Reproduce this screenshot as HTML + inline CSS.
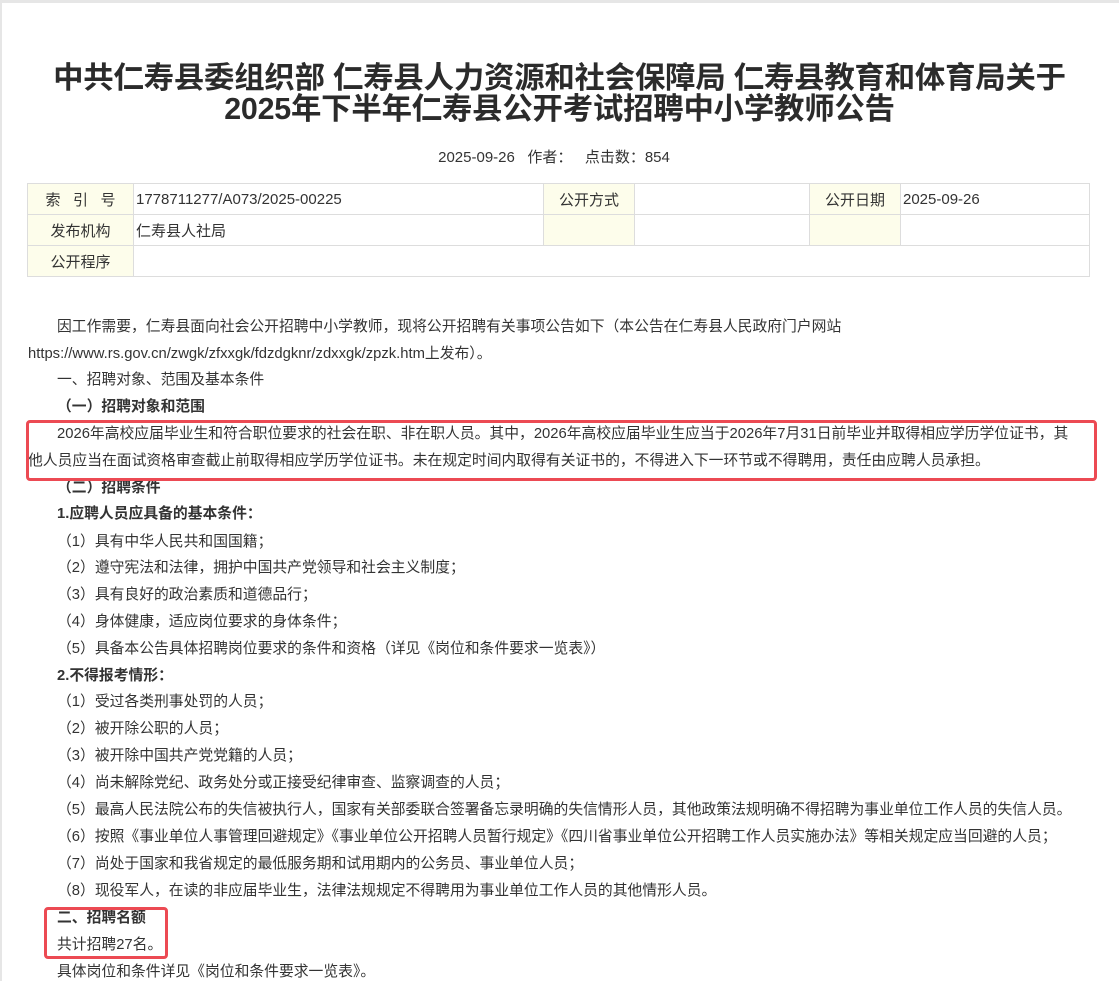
<!DOCTYPE html>
<html><head><meta charset="utf-8"><style>
body{margin:0;width:1119px;height:981px;overflow:hidden;background:#fff;font-family:"Liberation Sans","Noto Sans CJK SC",sans-serif;color:#333;position:relative}
.frame{position:absolute;left:0;top:0;width:1119px;height:981px;border-left:2px solid #e6e6e6;border-top:3px solid #e6e6e6;box-sizing:border-box}
h1{position:absolute;left:0;width:1119px;top:63px;margin:0;text-align:center;font-size:30.4px;line-height:31px;font-weight:bold;color:#2b2b2b;letter-spacing:-0.2px}
.meta{position:absolute;top:148px;left:0;width:1108px;text-align:center;font-size:15px;line-height:20px}
table{position:absolute;left:27px;top:183px;width:1063px;border-collapse:collapse;font-size:15px}
td{border:1px solid #ddd;height:30px;padding:0 0 0 2px;color:#333}
td.l{background:#fdfdeb;text-align:center;padding:0}
.ln{position:absolute;left:28px;font-size:14.8px;letter-spacing:0;line-height:20px;white-space:nowrap}
b{font-weight:bold;color:#333}
.box{position:absolute;border:3px solid #ec4a53;border-radius:4px;box-sizing:border-box}
</style></head><body>
<div class="frame"></div>
<h1>中共仁寿县委组织部 仁寿县人力资源和社会保障局 仁寿县教育和体育局关于<br>2025年下半年仁寿县公开考试招聘中小学教师公告</h1>
<div class="meta">2025-09-26&nbsp;&nbsp;&nbsp;作者：&nbsp;&nbsp;&nbsp;点击数：854</div>
<table>
<tr><td class="l" style="width:105px">索&nbsp;&nbsp;&nbsp;引&nbsp;&nbsp;&nbsp;号</td><td style="width:407px">1778711277/A073/2025-00225</td><td class="l" style="width:90px">公开方式</td><td style="width:172px"></td><td class="l" style="width:90px">公开日期</td><td>2025-09-26</td></tr>
<tr><td class="l">发布机构</td><td>仁寿县人社局</td><td class="l"></td><td></td><td class="l"></td><td></td></tr>
<tr><td class="l">公开程序</td><td colspan="5"></td></tr>
</table>
<div class="ln" style="top:317px;left:57px">因工作需要，仁寿县面向社会公开招聘中小学教师，现将公开招聘有关事项公告如下（本公告在仁寿县人民政府门户网站</div>
<div class="ln" style="top:344px">https://www.rs.gov.cn/zwgk/zfxxgk/fdzdgknr/zdxxgk/zpzk.htm上发布）。</div>
<div class="ln" style="top:370px;left:57px">一、招聘对象、范围及基本条件</div>
<div class="ln" style="top:397px;left:57px"><b>（一）招聘对象和范围</b></div>
<div class="ln" style="top:424px;left:57px">2026年高校应届毕业生和符合职位要求的社会在职、非在职人员。其中，2026年高校应届毕业生应当于2026年7月31日前毕业并取得相应学历学位证书，其</div>
<div class="ln" style="top:451px">他人员应当在面试资格审查截止前取得相应学历学位证书。未在规定时间内取得有关证书的，不得进入下一环节或不得聘用，责任由应聘人员承担。</div>
<div class="ln" style="top:478px;left:57px"><b>（二）招聘条件</b></div>
<div class="ln" style="top:504px;left:57px"><b>1.应聘人员应具备的基本条件：</b></div>
<div class="ln" style="top:532px;left:57px">（1）具有中华人民共和国国籍；</div>
<div class="ln" style="top:558px;left:57px">（2）遵守宪法和法律，拥护中国共产党领导和社会主义制度；</div>
<div class="ln" style="top:585px;left:57px">（3）具有良好的政治素质和道德品行；</div>
<div class="ln" style="top:612px;left:57px">（4）身体健康，适应岗位要求的身体条件；</div>
<div class="ln" style="top:639px;left:57px">（5）具备本公告具体招聘岗位要求的条件和资格（详见《岗位和条件要求一览表》）</div>
<div class="ln" style="top:666px;left:57px"><b>2.不得报考情形：</b></div>
<div class="ln" style="top:692px;left:57px">（1）受过各类刑事处罚的人员；</div>
<div class="ln" style="top:719px;left:57px">（2）被开除公职的人员；</div>
<div class="ln" style="top:746px;left:57px">（3）被开除中国共产党党籍的人员；</div>
<div class="ln" style="top:773px;left:57px">（4）尚未解除党纪、政务处分或正接受纪律审查、监察调查的人员；</div>
<div class="ln" style="top:800px;left:57px">（5）最高人民法院公布的失信被执行人，国家有关部委联合签署备忘录明确的失信情形人员，其他政策法规明确不得招聘为事业单位工作人员的失信人员。</div>
<div class="ln" style="top:827px;left:57px">（6）按照《事业单位人事管理回避规定》《事业单位公开招聘人员暂行规定》《四川省事业单位公开招聘工作人员实施办法》等相关规定应当回避的人员；</div>
<div class="ln" style="top:854px;left:57px">（7）尚处于国家和我省规定的最低服务期和试用期内的公务员、事业单位人员；</div>
<div class="ln" style="top:881px;left:57px">（8）现役军人，在读的非应届毕业生，法律法规规定不得聘用为事业单位工作人员的其他情形人员。</div>
<div class="ln" style="top:908px;left:57px"><b>二、招聘名额</b></div>
<div class="ln" style="top:935px;left:57px">共计招聘27名。</div>
<div class="ln" style="top:962px;left:57px">具体岗位和条件详见《岗位和条件要求一览表》。</div>
<div class="box" style="left:26px;top:420px;width:1071px;height:61px"></div>
<div class="box" style="left:44px;top:907px;width:124px;height:52px"></div>
</body></html>
